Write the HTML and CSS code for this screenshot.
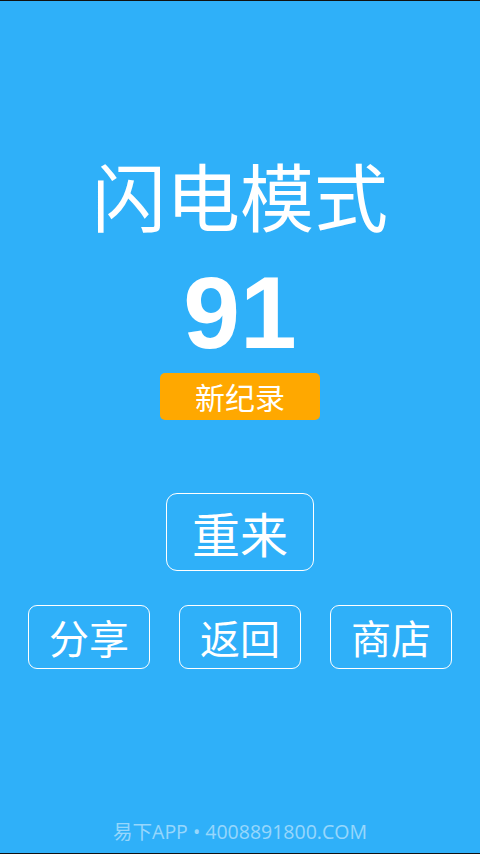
FILE: index.html
```html
<!DOCTYPE html>
<html lang="zh">
<head>
<meta charset="utf-8">
<link rel="stylesheet" href="styles.css">
</head>
<body>
<main class="screen">
  <h1 class="title">闪电模式</h1>
  <div class="score">91</div>
  <div class="badge">新纪录</div>
  <button class="btn btn-retry">重来</button>
  <div class="row">
    <button class="btn btn-small">分享</button>
    <button class="btn btn-small">返回</button>
    <button class="btn btn-small">商店</button>
  </div>
  <footer class="footer">易下APP • 4008891800.COM</footer>
</main>
</body>
</html>
```
FILE: styles.css
```css
* { box-sizing: border-box; }
html, body { margin: 0; padding: 0; }
body { width: 480px; height: 854px; background: #000; overflow: hidden; }
.screen {
  width: 480px;
  height: 854px;
  border-top: 1px solid #111;
  border-bottom: 1px solid #111;
  background: #2fb0f9;
  display: flex;
  flex-direction: column;
  align-items: center;
  color: #fff;
  font-family: "Noto Sans CJK SC", "Liberation Sans", sans-serif;
  padding-top: 153px;
}
.title {
  margin: 0;
  font-weight: 400;
  font-size: 74px;
  line-height: 80px;
  height: 80px;
}
.score {
  margin-top: 29px;
  font-family: "Liberation Sans", Arial, sans-serif;
  font-weight: 700;
  font-size: 102px;
  line-height: 100px;
  height: 100px;
}
.badge {
  margin-top: 10px;
  width: 160px;
  height: 47px;
  border-radius: 5px;
  background: #ffa800;
  font-size: 30px;
  line-height: 47px;
  text-align: center;
}
.btn {
  background: transparent;
  color: #fff;
  border: 1.5px solid #fff;
  font-family: "Noto Sans CJK SC", sans-serif;
  padding: 0;
  display: flex;
  align-items: center;
  justify-content: center;
}
.btn-retry {
  margin-top: 73px;
  width: 148px;
  height: 78px;
  border-radius: 11px;
  font-size: 48px;
}
.row {
  margin-top: 34px;
  display: flex;
  gap: 29px;
}
.btn-small {
  width: 122px;
  height: 64px;
  border-radius: 9px;
  font-size: 40px;
}
.footer {
  margin-top: auto;
  margin-bottom: 8px;
  font-size: 19.5px;
  line-height: 26px;
  color: rgba(255,255,255,0.5);
  font-family: "Open Sans", "Noto Sans CJK SC", sans-serif;
}
```
